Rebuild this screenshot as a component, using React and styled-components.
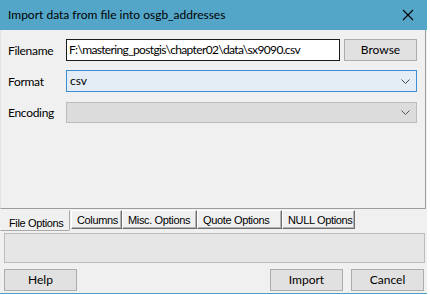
import styled, { createGlobalStyle } from 'styled-components';

const GlobalStyle = createGlobalStyle`
	html, body {
		margin: 0;
		padding: 0;
		background: #ffffff;
	}
	* {
		box-sizing: border-box;
	}
`;

const uiFont = `Lato, 'Liberation Sans', sans-serif`;
const tabFont = `'Liberation Sans', Arial, sans-serif`;

const Window = styled.div`
	width: 427px;
	height: 294px;
	display: flex;
	flex-direction: column;
	background: #f0f0f0;
	border-bottom: 1px solid #4f9fc2;
	font-family: ${uiFont};
	font-size: 12px;
	color: #000;
`;

const TitleBar = styled.div`
	height: 30px;
	flex: none;
	display: flex;
	align-items: center;
	justify-content: space-between;
	padding: 0 9px 1px 8px;
	background: #53a6c8;
	color: #000;
	font-size: 12px;
`;

const CloseButton = styled.svg`
	width: 12px;
	height: 12px;
	margin-right: 4px;
`;

const UpperPanel = styled.div`
	height: 179px;
	flex: none;
	width: 426px;
	display: flex;
	flex-direction: column;
	gap: 9px;
	padding: 9px 8px 0 7px;
	border-right: 1px solid #9d9d9d;
	border-bottom: 1px solid #9d9d9d;
	border-left: 1px solid #e2e2e2;
`;

const FieldRow = styled.div`
	display: flex;
	align-items: center;
	height: 22px;
`;

const Label = styled.label`
	width: 58px;
	flex: none;
	letter-spacing: -0.3px;
`;

const TextInput = styled.div`
	width: 274px;
	height: 22px;
	display: flex;
	align-items: center;
	padding: 0 0 1px 2px;
	background: #fff;
	border: 1px solid #1a1a1a;
	white-space: nowrap;
	overflow: hidden;
	letter-spacing: -0.65px;
`;

const Button = styled.div`
	width: ${(p) => p.$w || 73}px;
	height: 22px;
	flex: none;
	display: flex;
	align-items: center;
	justify-content: center;
	padding-bottom: 1px;
	margin-right: ${(p) => p.$mr || 0}px;
	background: #e1e1e1;
	border: 1px solid #adadad;
`;

const Combo = styled.div`
	width: 353px;
	height: ${(p) => (p.$disabled ? 21 : 22)}px;
	display: flex;
	align-items: center;
	justify-content: space-between;
	padding: 0 6px 1px 3px;
	background: ${(p) => (p.$disabled ? '#dcdcdc' : '#e4edf5')};
	border: 1px solid ${(p) => (p.$disabled ? '#bcbcbc' : '#3b8fd5')};
`;

const Chevron = styled.svg`
	width: 9px;
	height: 5px;
	margin-top: 1px;
`;

const TabStrip = styled.div`
	height: 22px;
	flex: none;
	display: flex;
	align-items: flex-start;
	padding-top: 1px;
	font-family: ${tabFont};
	font-size: 11px;
	letter-spacing: -0.35px;
`;

const Tab = styled.div`
	width: ${(p) => p.$w}px;
	height: ${(p) => (p.$active ? 21 : 19)}px;
	display: flex;
	align-items: center;
	padding-left: ${(p) => (p.$active ? 8 : 5)}px;
	padding-top: ${(p) => (p.$active ? 4 : 0)}px;
	margin-right: ${(p) => (p.$active ? 1 : 0)}px;
	white-space: nowrap;
	border: 1px solid;
	border-color: ${(p) =>
		p.$active ? 'transparent #a8a8a8 #a8a8a8 transparent' : '#ffffff #6e6e6e #6e6e6e #ffffff'};
	border-bottom-right-radius: ${(p) => (p.$active ? 2 : 0)}px;
	box-shadow: ${(p) => (p.$active ? 'none' : 'inset -1px -1px 0 #b4b4b4')};
`;

const OptionsPanel = styled.div`
	height: 30px;
	flex: none;
	margin: 2px 2px 0 4px;
	background: #e6e6e6;
	border: 1px solid #bdbdbd;
`;

const ButtonRow = styled.div`
	display: flex;
	align-items: center;
	padding: 6px 0 0 4px;
	gap: 8px;
`;

const Spacer = styled.div`
	flex: 1;
`;

const tabs = [
	{ label: 'File Options', w: 70, active: true },
	{ label: 'Columns', w: 51 },
	{ label: 'Misc. Options', w: 75 },
	{ label: 'Quote Options', w: 85 },
	{ label: 'NULL Options', w: 73 },
];

export default function App() {
	return (
		<>
			<GlobalStyle />
			<Window>
				<TitleBar>
					<span>Import data from file into osgb_addresses</span>
					<CloseButton viewBox='0 0 12 12'>
						<path d='M1 1L11 11M11 1L1 11' stroke='#000' strokeWidth='1.1' />
					</CloseButton>
				</TitleBar>
				<UpperPanel>
					<FieldRow>
						<Label>Filename</Label>
						<TextInput>F:\mastering_postgis\chapter02\data\sx9090.csv</TextInput>
						<Spacer />
						<Button>Browse</Button>
					</FieldRow>
					<FieldRow>
						<Label>Format</Label>
						<Combo>
							<span>csv</span>
							<Chevron viewBox='0 0 9 5'>
								<path d='M0.5 0.5L4.5 4.5L8.5 0.5' fill='none' stroke='#444' strokeWidth='1' />
							</Chevron>
						</Combo>
					</FieldRow>
					<FieldRow>
						<Label>Encoding</Label>
						<Combo $disabled>
							<span />
							<Chevron viewBox='0 0 9 5'>
								<path d='M0.5 0.5L4.5 4.5L8.5 0.5' fill='none' stroke='#555' strokeWidth='1' />
							</Chevron>
						</Combo>
					</FieldRow>
				</UpperPanel>
				<TabStrip>
					{tabs.map((t) => (
						<Tab key={t.label} $w={t.w} $active={t.active}>
							{t.label}
						</Tab>
					))}
				</TabStrip>
				<OptionsPanel />
				<ButtonRow>
					<Button>Help</Button>
					<Spacer />
					<Button>Import</Button>
					<Button $mr={3}>Cancel</Button>
				</ButtonRow>
			</Window>
		</>
	);
}
